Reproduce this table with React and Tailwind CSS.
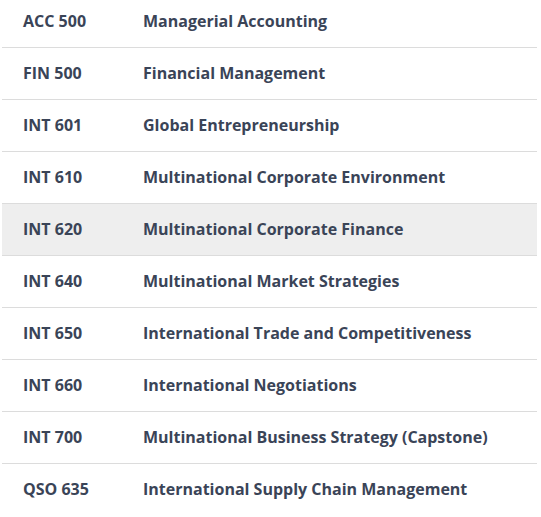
import React from 'react';

const courses = [
  ['ACC 500', 'Managerial Accounting'],
  ['FIN 500', 'Financial Management'],
  ['INT 601', 'Global Entrepreneurship'],
  ['INT 610', 'Multinational Corporate Environment'],
  ['INT 620', 'Multinational Corporate Finance'],
  ['INT 640', 'Multinational Market Strategies'],
  ['INT 650', 'International Trade and Competitiveness'],
  ['INT 660', 'International Negotiations'],
  ['INT 700', 'Multinational Business Strategy (Capstone)'],
  ['QSO 635', 'International Supply Chain Management'],
];

export default function App() {
  return (
    <div className="w-[541px] h-[517px] overflow-hidden bg-white font-['Open_Sans',sans-serif]">
      <div className="-mt-[4px] ml-[2px] w-[535px]">
        {courses.map(([code, title], i) => (
          <div
            key={code}
            className={`grid grid-cols-[120px_1fr] h-[52px] pb-[2px] items-center text-[16px] font-bold text-[#3a4457] ${
              i === 4 ? 'bg-[#eeeeee]' : ''
            } ${i < courses.length - 1 ? 'border-b border-[#dcdcdc]' : ''}`}
          >
            <div className="pl-[21px]">{code}</div>
            <div className="pl-[21px]">{title}</div>
          </div>
        ))}
      </div>
    </div>
  );
}
